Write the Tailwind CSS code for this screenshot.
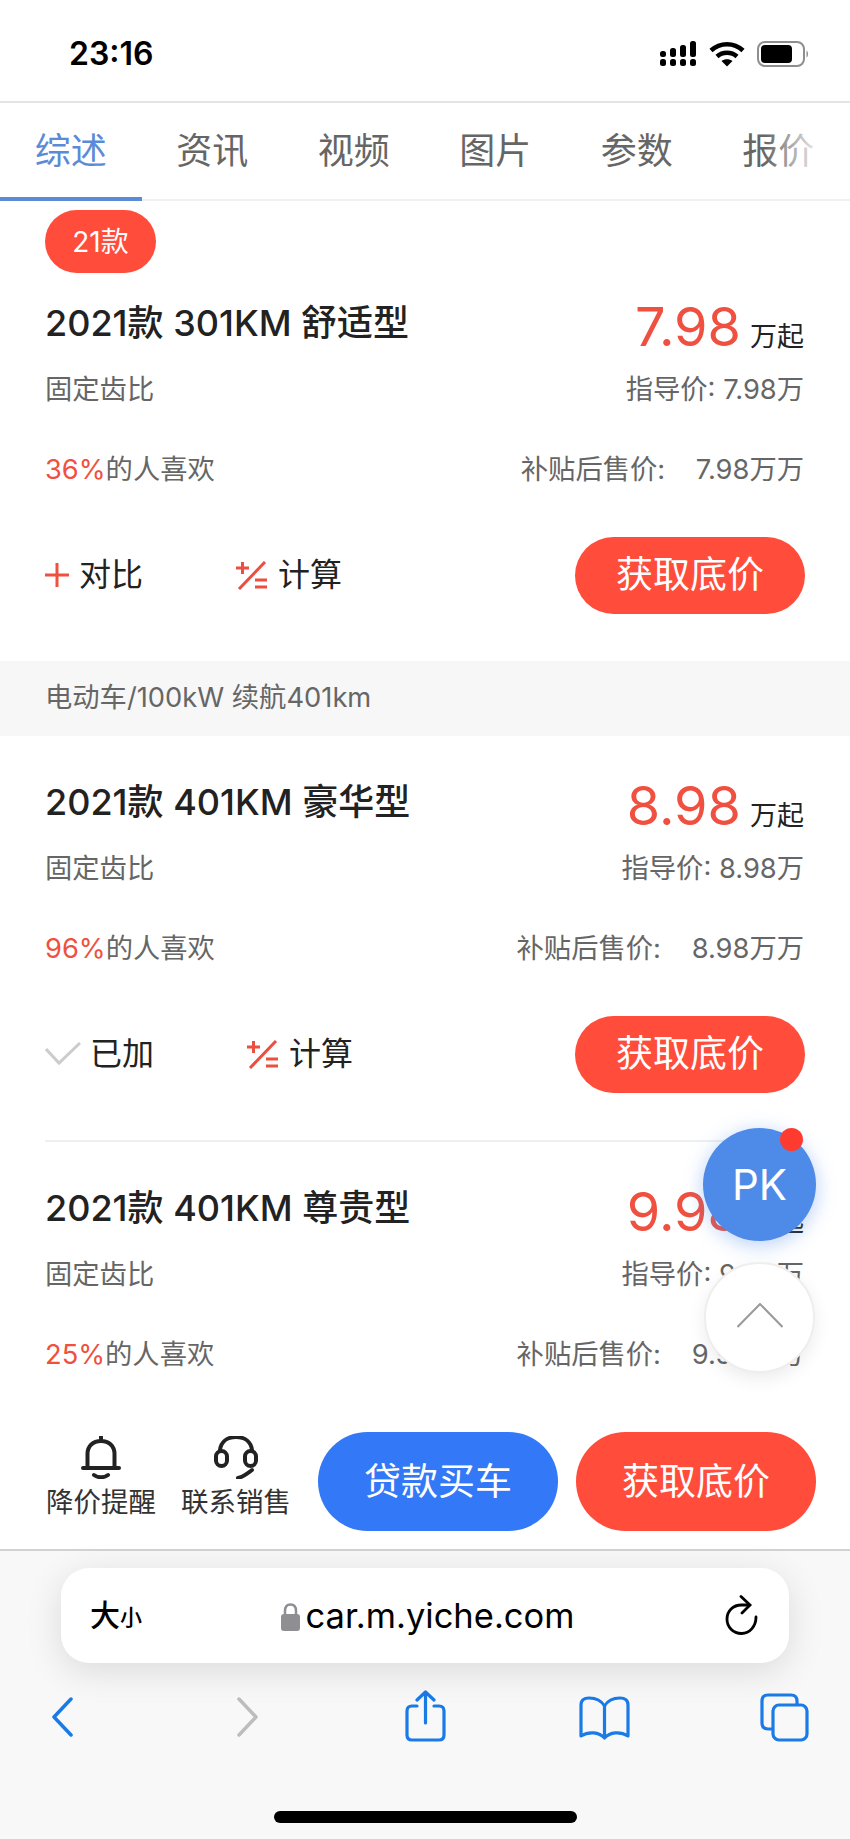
<!DOCTYPE html>
<html lang="zh-CN">
<head>
    <meta charset="UTF-8">
    <meta name="viewport" content="width=device-width, initial-scale=1.0">
    <title>car.m.yiche.com</title>
    <script src="https://cdn.jsdelivr.net/npm/@tailwindcss/browser@4"></script>
</head>
<body class="bg-white font-['Inter','Noto_Sans_CJK_SC',sans-serif]">
    <div class="relative flex flex-col w-[850px] h-[1839px] overflow-hidden">
        <!-- Status bar -->
        <div class="h-[103px] shrink-0 flex items-start justify-between pt-[36px] pl-[69px] pr-[41px] border-b-2 border-[#e4e4e4]">
            <span class="text-[32px] leading-[36px] font-semibold text-black">23:16</span>
            <div class="flex items-center gap-[12px] pt-[5px]">
                <svg width="37" height="26" viewBox="0 0 37 26" fill="#000">
                    <rect x="0" y="10" width="6" height="6" rx="2.5"/><rect x="0" y="18" width="6" height="7" rx="2.5"/>
                    <rect x="10" y="7" width="6" height="9" rx="2.5"/><rect x="10" y="18" width="6" height="7" rx="2.5"/>
                    <rect x="20" y="4" width="6" height="12" rx="2.5"/><rect x="20" y="18" width="6" height="7" rx="2.5"/>
                    <rect x="30" y="0" width="6" height="16" rx="2.5"/><rect x="30" y="18" width="6" height="7" rx="2.5"/>
                </svg>
                <svg width="36" height="26" viewBox="0 0 36 26" fill="none" stroke="#000" stroke-width="4.5">
                    <path d="M2 9.5C11 1 25 1 34 9.5"/>
                    <path d="M8 15.5C13.5 10.5 22.5 10.5 28 15.5"/>
                    <path d="M18 25.5L12.5 20C15.5 17.5 20.5 17.5 23.5 20Z" fill="#000" stroke="none"/>
                </svg>
                <svg width="52" height="26" viewBox="0 0 52 26" fill="none">
                    <rect x="1" y="1" width="46" height="24" rx="7" stroke="#8e8e8e" stroke-width="2"/>
                    <rect x="4" y="4" width="31" height="18" rx="4" fill="#000"/>
                    <path d="M49.500 9.500C51.500 10.500 51.500 15.500 49.500 16.500Z" fill="#8e8e8e"/>
                </svg>
            </div>
        </div>

        <!-- Tabs -->
        <div class="relative h-[98px] shrink-0 flex border-b-2 border-[#f0f0f0] text-[36px] text-[#666]">
            <div class="relative w-[141.500px] flex items-center justify-center text-[#5b8bd6]">综述
                <div class="absolute left-0 right-0 bottom-[-2px] h-[4px] bg-[#5b8bd6]"></div>
            </div>
            <div class="w-[141.500px] flex items-center justify-center">资讯</div>
            <div class="w-[141.500px] flex items-center justify-center">视频</div>
            <div class="w-[141.500px] flex items-center justify-center">图片</div>
            <div class="w-[141.500px] flex items-center justify-center">参数</div>
            <div class="w-[141.500px] flex items-center justify-center">报价</div>
            <div class="absolute right-0 top-0 bottom-0 w-[85px] bg-linear-to-r from-white/0 to-white to-[70%]"></div>
        </div>

        <!-- List -->
        <div class="flex-1 min-h-0 overflow-hidden">
            <div class="pl-[45px] pr-[46px]">
                <div class="mt-[9px] mb-[17px] w-[111px] h-[63px] rounded-full bg-[#ff4c3b] text-white text-[28px] flex items-center justify-center">21款</div>
                <div class="h-[66px] flex items-center justify-between">
                    <span class="text-[36px] font-medium text-[#222]">2021款 301KM 舒适型</span>
                    <div class="flex items-baseline gap-[9px] mt-[8px]">
                        <span class="text-[54px] leading-[66px] text-[#f0503f]">7.98</span>
                        <span class="text-[27px] text-[#222]">万起</span>
                    </div>
                </div>
                <div class="h-[66px] pt-[2px] flex items-center justify-between text-[27.300px] text-[#666]">
                    <span>固定齿比</span><span>指导价: 7.98万</span>
                </div>
                <div class="h-[92px] pt-[4px] flex items-center justify-between text-[27.300px] text-[#666]">
                    <span><span class="text-[#f0503f]">36%</span>的人喜欢</span><span>补贴后售价:&nbsp;&nbsp;&nbsp; 7.98万万</span>
                </div>
                <div class="h-[120px] pt-[2px] flex items-center justify-between">
                    <div class="flex items-center gap-[93px] text-[32px] text-[#222]">
                        <div class="flex items-center gap-[10px]">
                            <svg width="24" height="24" viewBox="0 0 24 24" stroke="#f0503f" stroke-width="3"><path d="M12 0V24M0 12H24"/></svg>
                            <span>对比</span>
                        </div>
                        <div class="flex items-center gap-[11px]">
                            <svg width="31" height="29" viewBox="0 0 31 29" fill="none" stroke="#ea4f40" stroke-width="3"><path d="M0 7H13M6.500 1V13M3 28L29 1M19 19H31M19 26H31"/></svg>
                            <span>计算</span>
                        </div>
                    </div>
                    <div class="mr-[-1px] w-[230px] h-[77px] rounded-full bg-[#ff4c3b] text-white text-[37px] leading-[44px] flex items-center justify-center">获取底价</div>
                </div>
            </div>

            <div class="mt-[27px] h-[75px] bg-[#f7f7f7] px-[45px] flex items-center text-[27.300px] text-[#666]">电动车/100kW 续航401km</div>

            <div class="ml-[45px] mr-[46px] pt-[33px] pb-[27px] border-b-2 border-[#efefef]">
                <div class="h-[66px] flex items-center justify-between">
                    <span class="text-[36px] font-medium text-[#222]">2021款 401KM 豪华型</span>
                    <div class="flex items-baseline gap-[9px] mt-[8px]">
                        <span class="text-[54px] leading-[66px] text-[#f0503f]">8.98</span>
                        <span class="text-[27px] text-[#222]">万起</span>
                    </div>
                </div>
                <div class="h-[66px] pt-[2px] flex items-center justify-between text-[27.300px] text-[#666]">
                    <span>固定齿比</span><span>指导价: 8.98万</span>
                </div>
                <div class="h-[92px] pt-[4px] flex items-center justify-between text-[27.300px] text-[#666]">
                    <span><span class="text-[#f0503f]">96%</span>的人喜欢</span><span>补贴后售价:&nbsp;&nbsp;&nbsp; 8.98万万</span>
                </div>
                <div class="h-[120px] pt-[2px] flex items-center justify-between">
                    <div class="flex items-center gap-[93px] text-[32px] text-[#222]">
                        <div class="flex items-center gap-[9px]">
                            <svg width="36" height="24" viewBox="0 0 36 24" fill="none" stroke="#cccccc" stroke-width="3"><path d="M1 7L14 21L35 1"/></svg>
                            <span>已加</span>
                        </div>
                        <div class="flex items-center gap-[11px]">
                            <svg width="31" height="29" viewBox="0 0 31 29" fill="none" stroke="#ea4f40" stroke-width="3"><path d="M0 7H13M6.500 1V13M3 28L29 1M19 19H31M19 26H31"/></svg>
                            <span>计算</span>
                        </div>
                    </div>
                    <div class="mr-[-1px] w-[230px] h-[77px] rounded-full bg-[#ff4c3b] text-white text-[37px] leading-[44px] flex items-center justify-center">获取底价</div>
                </div>
            </div>

            <div class="pl-[45px] pr-[46px] pt-[33px]">
                <div class="h-[66px] flex items-center justify-between">
                    <span class="text-[36px] font-medium text-[#222]">2021款 401KM 尊贵型</span>
                    <div class="flex items-baseline gap-[9px] mt-[8px]">
                        <span class="text-[54px] leading-[66px] text-[#f0503f]">9.98</span>
                        <span class="text-[27px] text-[#222]">万起</span>
                    </div>
                </div>
                <div class="h-[66px] pt-[2px] flex items-center justify-between text-[27.300px] text-[#666]">
                    <span>固定齿比</span><span>指导价: 9.98万</span>
                </div>
                <div class="h-[92px] pt-[4px] flex items-center justify-between text-[27.300px] text-[#666]">
                    <span><span class="text-[#f0503f]">25%</span>的人喜欢</span><span>补贴后售价:&nbsp;&nbsp;&nbsp; 9.98万万</span>
                </div>
            </div>
        </div>

        <!-- Bottom action bar -->
        <div class="h-[140px] shrink-0 bg-white border-b-2 border-[#d2d2d2] flex items-start pt-[21px] pl-[46px] text-[27.500px] text-[#333]">
            <div class="w-[110px] flex flex-col items-center mt-[4px]">
                <svg width="40" height="43" viewBox="0 0 40 43" fill="none" stroke="#222" stroke-width="4" stroke-linecap="round">
                    <path d="M20 1V5M6.500 31V18C6.500 10 12 5 20 5C28 5 33.500 10 33.500 18V31"/>
                    <path d="M2 32H38"/>
                    <path d="M13 39C17 42 23 42 27 39"/>
                </svg>
                <span class="leading-[36px] mt-[5px] whitespace-nowrap">降价提醒</span>
            </div>
            <div class="w-[110px] ml-[25px] flex flex-col items-center mt-[4px]">
                <svg width="44" height="43" viewBox="0 0 44 43" fill="none" stroke="#222" stroke-width="4" stroke-linecap="round">
                    <path d="M6 14C7 6 13 1 22 1C31 1 37 6 38 14"/>
                    <rect x="2" y="15" width="11" height="15" rx="5.500"/>
                    <rect x="31" y="15" width="11" height="15" rx="5.500"/>
                    <path d="M24 42C29 41 33 38 38 34"/>
                </svg>
                <span class="leading-[36px] mt-[5px] whitespace-nowrap">联系销售</span>
            </div>
            <div class="ml-[27px] w-[240px] h-[99px] rounded-full bg-[#3378f6] text-white text-[37px] flex items-center justify-center">贷款买车</div>
            <div class="ml-[18px] w-[240px] h-[99px] rounded-full bg-[#ff4c3b] text-white text-[37px] flex items-center justify-center">获取底价</div>
        </div>

        <!-- Safari toolbar -->
        <div class="h-[288px] shrink-0 bg-[#f8f8f8] pt-[17px]">
            <div class="ml-[61px] w-[728px] h-[95px] pl-[5px] rounded-[28px] bg-white shadow-[0_8px_36px_rgba(0,0,0,0.12)] relative flex items-center justify-center">
                <div class="absolute left-[29px] top-0 bottom-0 flex items-center font-medium text-black">
                    <span class="text-[30px]">大</span><span class="text-[22px] mt-[4px]">小</span>
                </div>
                <svg class="mr-[6px] mt-[2px]" width="19" height="28" viewBox="0 0 19 28" fill="#8e8e93">
                    <path d="M4 12V8C4 4 6 1.500 9.500 1.500C13 1.500 15 4 15 8V12" fill="none" stroke="#8e8e93" stroke-width="2.500"/>
                    <rect x="0" y="11" width="19" height="17" rx="3"/>
                </svg>
                <span class="text-[34.500px] text-black">car.m.yiche.com</span>
                <svg class="absolute left-[664px] top-[27px]" width="33" height="40" viewBox="0 0 33 40" fill="none" stroke="#000" stroke-width="2.800" stroke-linecap="round">
                    <path d="M31 22C31 31 25 38.500 16.500 38.500C8 38.500 2 32 2 24C2 16 8 10 16.500 10H24"/>
                    <path d="M16 1.500L25 10L17 18"/>
                </svg>
            </div>
            <div class="flex items-start mt-[27px]">
                <svg class="ml-[51px] mt-[7px]" width="22" height="40" viewBox="0 0 22 40" fill="none" stroke="#1a7ae6" stroke-width="3.500" stroke-linecap="round" stroke-linejoin="round"><path d="M20 2L3 20L20 38"/></svg>
                <svg class="ml-[164px] mt-[7px]" width="22" height="40" viewBox="0 0 22 40" fill="none" stroke="#bdbdbd" stroke-width="3.500" stroke-linecap="round" stroke-linejoin="round"><path d="M2 2L19 20L2 38"/></svg>
                <svg class="ml-[146px]" width="41" height="52" viewBox="0 0 41 52" fill="none" stroke="#1a7ae6" stroke-width="3.200" stroke-linecap="round" stroke-linejoin="round"><path d="M12 16H7C3.500 16 2 18 2 21V45C2 48 3.500 50 7 50H34C37.500 50 39 48 39 45V21C39 18 37.500 16 34 16H29"/><path d="M20.500 33V2M12 10L20.500 2L29 10"/></svg>
                <svg class="ml-[133px] mt-[6px]" width="51" height="44" viewBox="0 0 51 44" fill="none" stroke="#1a7ae6" stroke-width="3.200" stroke-linecap="round" stroke-linejoin="round"><path d="M25.500 10C22 4 16 2 10 2C5 2 2 4 2 9V40C10 35 20 36 25.500 42C31 36 41 35 49 40V9C49 4 46 2 41 2C35 2 29 4 25.500 10ZM25.500 10V42"/></svg>
                <svg class="ml-[130px] mt-[3px]" width="49" height="49" viewBox="0 0 49 49" fill="none" stroke="#1a7ae6" stroke-width="3.200" stroke-linejoin="round"><path d="M37 12V8C37 4 35 2 31 2H8C4 2 2 4 2 8V30C2 34 4 36 8 36H12"/><rect x="13" y="12" width="34" height="35" rx="6"/></svg>
            </div>
            <div class="mt-[69px] ml-[274px] w-[303px] h-[12px] rounded-full bg-black"></div>
        </div>

        <!-- Floating buttons -->
        <div class="absolute left-[703px] top-[1128px] w-[113px] h-[113px] rounded-full bg-[#4e8ae8] shadow-[0_4px_20px_rgba(78,138,232,0.4)] flex items-center justify-center text-white text-[42px]">PK
            <div class="absolute right-[13px] top-0 w-[23px] h-[23px] rounded-full bg-[#ff3b30]"></div>
        </div>
        <div class="absolute left-[704px] top-[1262px] w-[111px] h-[111px] rounded-full bg-white border-2 border-[#eeeeee] shadow-[0_6px_18px_rgba(0,0,0,0.08)] flex items-center justify-center">
            <svg class="mb-[4px]" width="46" height="25" viewBox="0 0 46 25" fill="none" stroke="#999" stroke-width="2"><path d="M0.500 24L23 1L45.500 24"/></svg>
        </div>
    </div>
</body>
</html>
